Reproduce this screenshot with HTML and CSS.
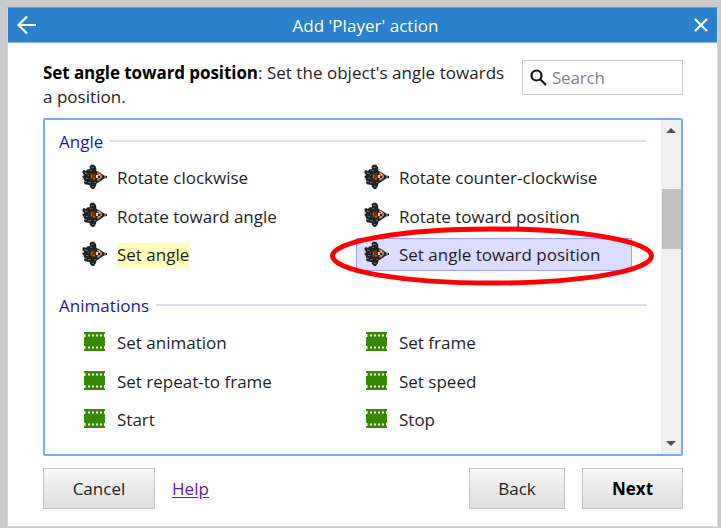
FILE: index.html
```html
<!DOCTYPE html>
<html lang="en">
<head>
<meta charset="utf-8">
<title>Add 'Player' action</title>
<link rel="stylesheet" href="styles.css">
</head>
<body>
<svg class="defs" width="0" height="0">
  <symbol id="ship" viewBox="0 0 26 26">
    <path fill="#202324" d="M7.500 2.500L9 .800h3L14 3l.500 4 2.500 1 3 2 2 1.500 3 .500v2l-3 .500-2 1.500-3 2-2.500 1.500L14 22l-2 3h-2l-2-2-.500-2-3.500-.500L2.500 20l-.500-2 1-1-1.500-1v-2L.500 13.500v-1.500L2 11 .500 9V7L2 6l2 1 1-1.500L8 5z"/>
    <path fill="#d0d2d2" d="M0 10.300h2v1.200H0zM0 15h2v1H0zM3.300 8.500h.800v1h-.800zM3.500 17h1v.800h-1z"/>
    <path fill="#5c6163" d="M9 3h3v1H9zM8 6h2v1H8zM4 9h2v1H4zM4 14h2v1H4zM6 18h3v1H6zM10 22h2v1h-2zM12 18h2v1h-2zM6 11h1v1H6zM22 12h2v2h-2z"/>
    <path fill="#74340c" d="M8.500 9.500h5v6h-5z"/>
    <path fill="#b96318" d="M9 11h1v3H9zM11 14h2v1.500h-2z"/>
    <path fill="#c9805f" d="M15 8.500h2l3 3v2l-3 3h-2l1-4z"/>
    <path fill="#e8d4c7" d="M14 11h2v3h-2zM17 10h1v1h-1z"/>
    <path fill="#242424" d="M16 12h2v2h-2zM13 8h1v3h-1z"/>
  </symbol>
  <symbol id="film" viewBox="0 0 21 19">
    <path fill="#378a00" d="M0 0h21v19H0z"/>
    <path fill="#fff" d="M0 2h1.500v3H0zM4 2.500h2v2H4zM8 2.500h2v2H8zM12 2.500h2v2h-2zM16 2.500h2v2h-2zM20 2h1v3h-1zM0 14h1.500v3H0zM4 14.500h2v2H4zM8 14.500h2v2H8zM12 14.500h2v2h-2zM16 14.500h2v2h-2zM20 14h1v3h-1z"/>
  </symbol>
</svg>
<main class="dialog">
  <header class="titlebar">
    <svg class="back-arrow" viewBox="0 0 20 20"><path d="M19 10H2M10 1.500L1.500 10l8.500 8.500"/></svg>
    <h1>Add 'Player' action</h1>
    <svg class="close" viewBox="0 0 14 14"><path d="M1 1l12 12M13 1L1 13"/></svg>
  </header>
  <div class="intro">
    <p><b>Set angle toward position</b>: Set the object's angle towards<br>a position.</p>
    <div class="search"><svg viewBox="0 0 17 17"><circle cx="6.500" cy="6.500" r="5"/><path d="M10 10l6 6"/></svg><span>Search</span></div>
  </div>
  <div class="list">
    <div class="content">
      <h2>Angle</h2>
      <div class="grid">
        <div class="item"><svg class="ship"><use href="#ship"/></svg><span>Rotate clockwise</span></div>
        <div class="item"><svg class="ship"><use href="#ship"/></svg><span>Rotate counter-clockwise</span></div>
        <div class="item"><svg class="ship"><use href="#ship"/></svg><span>Rotate toward angle</span></div>
        <div class="item"><svg class="ship"><use href="#ship"/></svg><span>Rotate toward position</span></div>
        <div class="item"><svg class="ship"><use href="#ship"/></svg><span class="marked">Set angle</span></div>
        <div class="item selected"><svg class="ship"><use href="#ship"/></svg><span>Set angle toward position</span>
          <svg class="ring" viewBox="0 0 324 60"><ellipse cx="162" cy="30" rx="159.500" ry="27"/></svg>
        </div>
      </div>
      <h2>Animations</h2>
      <div class="grid animations">
        <div class="item"><svg class="film"><use href="#film"/></svg><span>Set animation</span></div>
        <div class="item"><svg class="film"><use href="#film"/></svg><span>Set frame</span></div>
        <div class="item"><svg class="film"><use href="#film"/></svg><span>Set repeat-to frame</span></div>
        <div class="item"><svg class="film"><use href="#film"/></svg><span>Set speed</span></div>
        <div class="item"><svg class="film"><use href="#film"/></svg><span>Start</span></div>
        <div class="item"><svg class="film"><use href="#film"/></svg><span>Stop</span></div>
      </div>
    </div>
    <div class="scrollbar">
      <svg viewBox="0 0 10 5"><path d="M0 5l5-5 5 5z"/></svg>
      <div class="thumb"></div>
      <svg viewBox="0 0 10 5"><path d="M0 0h10L5 5z"/></svg>
    </div>
  </div>
  <footer>
    <button class="cancel">Cancel</button>
    <a href="#">Help</a>
    <button class="back">Back</button>
    <button class="next">Next</button>
  </footer>
</main>
</body>
</html>
```
FILE: styles.css
```css
* { box-sizing: border-box; }
body {
  margin: 0;
  padding: 7px 3px 1px 7px;
  height: 528px;
  overflow: hidden;
  background: #cbcbcb;
  font: 17px/24px "Open Sans", "Noto Sans", sans-serif;
  letter-spacing: 0.03px;
  color: #1e1e1e;
}
.defs { position: absolute; }
.dialog {
  height: 520px;
  background: #fff;
  border: 1px solid #dadada;
  border-top-color: #5f9bce;
}
.titlebar {
  height: 35px;
  display: flex;
  align-items: center;
  padding: 0 9px;
  background: #2a80cd;
  border-bottom: 1px solid #83b7e6;
  color: #fff;
}
.titlebar svg { fill: none; stroke: #fff; stroke-width: 2.2; }
.back-arrow { width: 20px; height: 20px; }
.close { width: 14px; height: 14px; }
h1 { flex: 1; margin: 2px 0 0; font-size: 17px; font-weight: 400; text-align: center; }
.intro {
  display: flex;
  justify-content: space-between;
  height: 75px;
  padding: 17px 34px 0 35px;
}
p { margin: 1px 0 0; white-space: nowrap; }
b { color: #000; letter-spacing: -0.07px; }
.search {
  width: 161px;
  height: 35px;
  border: 1px solid #cacaca;
  display: flex;
  align-items: center;
  padding-left: 7px;
  gap: 5px;
  color: #828282;
  letter-spacing: -0.2px;
}
.search span { margin-top: 1px; }
.search svg { width: 17px; height: 17px; fill: none; stroke: #111; stroke-width: 2.2; }
.list {
  display: flex;
  height: 338px;
  margin: 0 34px 0 35px;
  border: 2px solid #78a9f6;
  border-radius: 2px;
}
.content { flex: 1; padding: 10px 14px 0 14px; }
h2 {
  display: flex;
  align-items: center;
  gap: 7px;
  margin: 0;
  height: 24px;
  font-size: 17px;
  font-weight: 400;
  color: #1717af;
}
h2::after { content: ""; flex: 1; height: 2px; margin-bottom: 2px; background: #dcdcff; }
.grid {
  display: grid;
  grid-template-columns: 276px 276px;
  grid-auto-rows: 33px;
  gap: 5.5px 6px;
  margin: 7px 0 0 15px;
  height: 133px;
  letter-spacing: 0;
}
.item {
  position: relative;
  display: flex;
  align-items: center;
  padding-left: 7px;
  border: 1px solid transparent;
  white-space: nowrap;
}
.ship { width: 26px; height: 26px; margin: 0 9px 2px 0; }
.film { width: 21px; height: 19px; margin: 0 12px 0 2px; }
.item span { margin-top: 1px; }
.animations span { margin-top: 3px; }
.marked { background: #ffffb8; }
.selected { background: #dcdcff; border-color: #9e9eff; }
.ring {
  position: absolute;
  left: -27px;
  top: -13px;
  width: 324px;
  height: 60px;
  fill: none;
  stroke: #f00;
  stroke-width: 5;
}
.scrollbar {
  width: 20px;
  background: #f0f0f0;
  display: flex;
  flex-direction: column;
  align-items: center;
  padding: 8px 0;
}
.scrollbar svg { width: 10px; height: 5px; fill: #505050; }
.thumb { width: 19px; height: 60px; margin: 56px 0 auto; background: #c1c1c1; }
footer { display: flex; align-items: center; padding: 12px 34px 0 35px; }
button {
  height: 41px;
  padding: 0;
  border: 1px solid #c4c4c4;
  background: linear-gradient(#f7f7f7, #dedede);
  font: inherit;
  letter-spacing: inherit;
  color: #222;
}
.cancel { width: 112px; }
a { margin-left: 17px; color: #5a2099; text-underline-offset: 2px; }
.back { width: 96px; margin-left: auto; }
.next { width: 101px; margin-left: 17px; font-weight: 700; color: #000; }
```
